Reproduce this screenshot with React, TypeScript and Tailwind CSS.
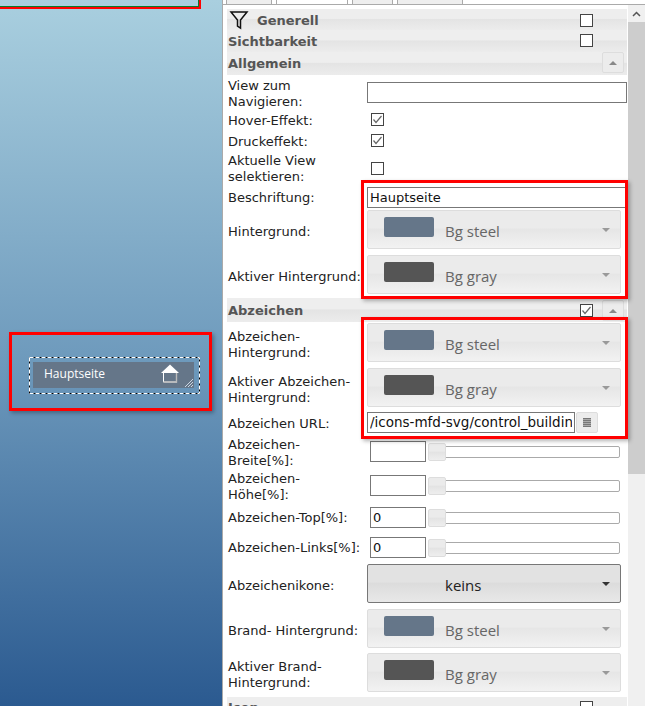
const tahoma = "font-['DejaVu_Sans',sans-serif]";

function Check({ on, className = "" }: { on?: boolean; className?: string }) {
  return (
    <span className={"flex h-[13px] w-[13px] items-center justify-center border border-[#444] bg-white " + className}>
      {on && (
        <svg width="11" height="11" viewBox="0 0 11 11" fill="none">
          <path d="M1.5 5.5 L4 8.5 L9.5 2" stroke="#666" strokeWidth="1.2" />
        </svg>
      )}
    </span>
  );
}

type HeaderProps = {
  title: string;
  h: number;
  check?: "on" | "off";
  checkTop?: number;
  toggleTop?: number;
  icon?: boolean;
  flat?: boolean;
};

function Header({ title, h, check, checkTop = 4, toggleTop, icon, flat }: HeaderProps) {
  return (
    <div
      className="relative flex items-center bg-[linear-gradient(#eeeeee_0%,#eeeeee_45%,#e4e4e4_50%,#ececec_100%)] pl-px"
      style={{ height: h }}
    >
      {icon && (
        <svg width="20" height="20" viewBox="0 0 20 20" fill="none" className="mr-[8px] ml-px">
          <path d="M2 2 H18 L11.5 10 V18 L8.5 16 V10 Z" stroke="#111" strokeWidth="1.5" />
        </svg>
      )}
      <span className={"text-[13px] font-bold text-[#555] " + (flat ? "" : "pt-[2px]")}>{title}</span>
      {check && (
        <span className="absolute left-[353px]" style={{ top: checkTop }}>
          <Check on={check === "on"} />
        </span>
      )}
      {toggleTop !== undefined && (
        <span
          className="absolute left-[375px] flex h-[21px] w-[22px] items-center justify-center rounded-[2px] border border-[#ddd] bg-[#ececec]"
          style={{ top: toggleTop }}
        >
          <span className="h-0 w-0 border-x-[4px] border-b-[4px] border-x-transparent border-b-[#888]" />
        </span>
      )}
    </div>
  );
}

function Row({ label, h, pad = 0, children }: { label: string; h: number; pad?: number; children?: React.ReactNode }) {
  return (
    <div className="flex items-center" style={{ height: h }}>
      <div className="w-[140px] shrink-0 whitespace-pre pl-px text-[13px] leading-[16px] text-[#222]" style={{ paddingTop: pad }}>
        {label}
      </div>
      {children}
    </div>
  );
}

function Select({ color, name, dark }: { color?: string; name: string; dark?: boolean }) {
  return (
    <div
      className={
        "relative h-[39px] w-[254px] rounded-[2px] border " +
        (dark
          ? "border-[#777] bg-[linear-gradient(#e2e2e2_0%,#e2e2e2_45%,#dcdcdc_50%,#e8e8e8_100%)]"
          : "border-[#ddd] bg-[linear-gradient(#ebebeb_0%,#ebebeb_45%,#e6e6e6_50%,#f2f2f2_100%)]")
      }
    >
      {color && <span className="absolute left-[16px] top-[6px] h-[20px] w-[50px] rounded-[2px]" style={{ backgroundColor: color }} />}
      <span className={"absolute left-[77px] top-[10px] font-['Open_Sans',sans-serif] text-[15px] leading-[20px] " + (dark ? "text-[#222]" : "text-[#666]")}>{name}</span>
      <span className={"absolute left-[234px] top-[17px] h-0 w-0 border-x-[4px] border-t-[4px] border-x-transparent " + (dark ? "border-t-[#333]" : "border-t-[#999]")} />
    </div>
  );
}

function Slider({ value }: { value?: string }) {
  return (
    <div className="ml-[3px] flex items-center">
      <div className="flex h-[21px] w-[56px] items-center border border-[#777] bg-white pl-[2px] text-[13px] text-[#111]">{value}</div>
      <div className="relative ml-[2px] h-[12px] w-[192px] rounded-[2px] border border-[#aaa] bg-white">
        <span className="absolute -top-[4px] -left-px h-[18px] w-[18px] rounded-[2px] border border-[#ddd] bg-[linear-gradient(#ebebeb_0%,#ebebeb_45%,#e3e3e3_50%,#eeeeee_100%)]" />
      </div>
    </div>
  );
}

const STEEL = "#657689";

const HILITES = [
  { left: 361, top: 180, width: 267, height: 119 },
  { left: 361, top: 317, width: 267, height: 122 },
];

export default function App() {
  return (
    <div className={"relative flex h-[706px] w-[645px] overflow-hidden bg-white " + tahoma}>
      {/* canvas */}
      <div className="relative h-full w-[222px] shrink-0 bg-[linear-gradient(#a9cfdf_0%,#6f9bbd_50%,#2b5a90_100%)]">
        <div className="absolute left-[-10px] top-[-10px] h-[19px] w-[211px] border-[2px] border-[#f00] shadow-[inset_-1px_-1px_0_#0a7a2a]" />
        <div className="absolute left-[9px] top-[332px] h-[79px] w-[203px] border-[3px] border-[#f00] shadow-[2px_2px_4px_rgba(0,0,0,0.3)]" />
        <div className="absolute left-[29px] top-[357px] h-[37px] w-[171px]">
          <svg width="171" height="37" viewBox="0 0 171 37" fill="none" className="absolute left-0 top-0">
            <rect x="0.5" y="0.5" width="170" height="36" stroke="#000" />
            <rect x="0.5" y="0.5" width="170" height="36" stroke="#fff" strokeDasharray="4 2" />
          </svg>
          <div className="absolute left-[4px] top-[5px] flex h-[26px] w-[161px] items-center bg-[#657689] pb-[2px] pl-[11px] font-['Open_Sans',sans-serif] text-[12px] text-white">
            Hauptseite
          </div>
          <svg width="18" height="19" viewBox="0 0 18 19" fill="none" className="absolute left-[132px] top-[7px]">
            <path d="M0 9 L9 0.5 L18 9 Z" fill="#fff" />
            <path d="M2.5 9 V18 H16" stroke="#fff" strokeWidth="1" />
            <path d="M2.5 18 H15.5 V9" stroke="#bbb" strokeWidth="1.4" />
          </svg>
          <svg width="8" height="8" viewBox="0 0 8 8" className="absolute left-[156px] top-[22px]" stroke="#cbd5e1" strokeWidth="1">
            <path d="M0 8 L8 0 M3 8 L8 3 M6 8 L8 6" />
          </svg>
        </div>
      </div>

      {/* property panel */}
      <div className="relative h-full flex-1 border-l border-[#aaa] bg-white">
        <div className="flex h-[5px] border-b border-[#aaa] bg-white">
          <span className="ml-[3px] w-[46px] border-x border-[#aaa] bg-[#eee]" />
          <span className="ml-[4px] w-[72px] border-x border-[#aaa]" />
          <span className="ml-[4px] w-[41px] border-x border-[#aaa] bg-[#eee]" />
          <span className="ml-[4px] w-[66px] border-x border-[#aaa] bg-[#eee]" />
        </div>
        <div className="flex h-[701px]">
          <div className="w-[404px] shrink-0 pt-[4px] pl-[4px]">
            <Header title="Generell" h={21} check="off" checkTop={5} icon />
            <Header title="Sichtbarkeit" h={22} check="off" checkTop={4} />
            <Header title="Allgemein" h={23} toggleTop={0} flat />
            <Row label={"View zum\nNavigieren:"} h={34} pad={3}>
              <div className="h-[21px] w-[260px] border border-[#777] bg-white" />
            </Row>
            <Row label="Hover-Effekt:" h={21} pad={3}><Check on className="ml-[4px]" /></Row>
            <Row label="Druckeffekt:" h={21} pad={3}><Check on className="ml-[4px]" /></Row>
            <Row label={"Aktuelle View\nselektieren:"} h={35}><Check className="ml-[4px]" /></Row>
            <Row label="Beschriftung:" h={23}>
              <div className="flex h-[21px] w-[260px] items-center border border-[#777] bg-white pl-[2px] text-[13px] text-[#111]">Hauptseite</div>
            </Row>
            <Row label="Hintergrund:" h={41} pad={4}><Select color={STEEL} name="Bg steel" /></Row>
            <Row label="Aktiver Hintergrund:" h={48} pad={6}><Select color="#555555" name="Bg gray" /></Row>
            <Header title="Abzeichen" h={24} check="on" checkTop={6} toggleTop={2} />
            <Row label={"Abzeichen-\nHintergrund:"} h={41} pad={4}><Select color={STEEL} name="Bg steel" /></Row>
            <Row label={"Aktiver Abzeichen-\nHintergrund:"} h={49} pad={4}><Select color="#555555" name="Bg gray" /></Row>
            <Row label="Abzeichen URL:" h={21} pad={2}>
              <div className="flex h-[21px] w-[208px] items-center border border-[#777] bg-white px-[2px] text-[13.5px] text-[#111]">
                <span className="flex-1 overflow-hidden whitespace-nowrap">/icons-mfd-svg/control_building</span>
              </div>
              <div className="ml-px flex h-[21px] w-[22px] items-center justify-center rounded-[2px] border border-[#ddd] bg-[#ececec]">
                <span className="h-[9px] w-[8px] bg-[repeating-linear-gradient(#777_0,#777_1px,#aaa_1px,#aaa_2px)]" />
              </div>
            </Row>
            <Row label={"Abzeichen-\nBreite[%]:"} h={37} pad={2}><Slider /></Row>
            <Row label={"Abzeichen-\nHöhe[%]:"} h={31} pad={2}><Slider /></Row>
            <Row label="Abzeichen-Top[%]:" h={33}><Slider value="0" /></Row>
            <Row label="Abzeichen-Links[%]:" h={27}><Slider value="0" /></Row>
            <Row label="Abzeichenikone:" h={45} pad={4}><Select name="keins" dark /></Row>
            <Row label="Brand- Hintergrund:" h={45} pad={4}><Select color={STEEL} name="Bg steel" /></Row>
            <Row label={"Aktiver Brand-\nHintergrund:"} h={43} pad={4}><Select color="#555555" name="Bg gray" /></Row>
            <div className="h-[3px]" />
            <Header title="Icon" h={20} check="off" checkTop={4} />
          </div>
          <div className="ml-px flex h-full w-[17px] flex-col bg-[#f0f0f0]">
            <div className="flex h-[17px] items-center justify-center">
              <svg width="9" height="6" viewBox="0 0 9 6" fill="none"><path d="M1 5 L4.5 1.5 L8 5" stroke="#555" strokeWidth="1.5" /></svg>
            </div>
            <div className="h-[452px] bg-[#cdcdcd]" />
          </div>
        </div>
      </div>

      {/* red marks over the panel */}
      {HILITES.map((box) => (
        <div
          key={box.top}
          className="absolute border-[3px] border-[#f00] shadow-[2px_2px_4px_rgba(0,0,0,0.3)]"
          style={box}
        />
      ))}
    </div>
  );
}
